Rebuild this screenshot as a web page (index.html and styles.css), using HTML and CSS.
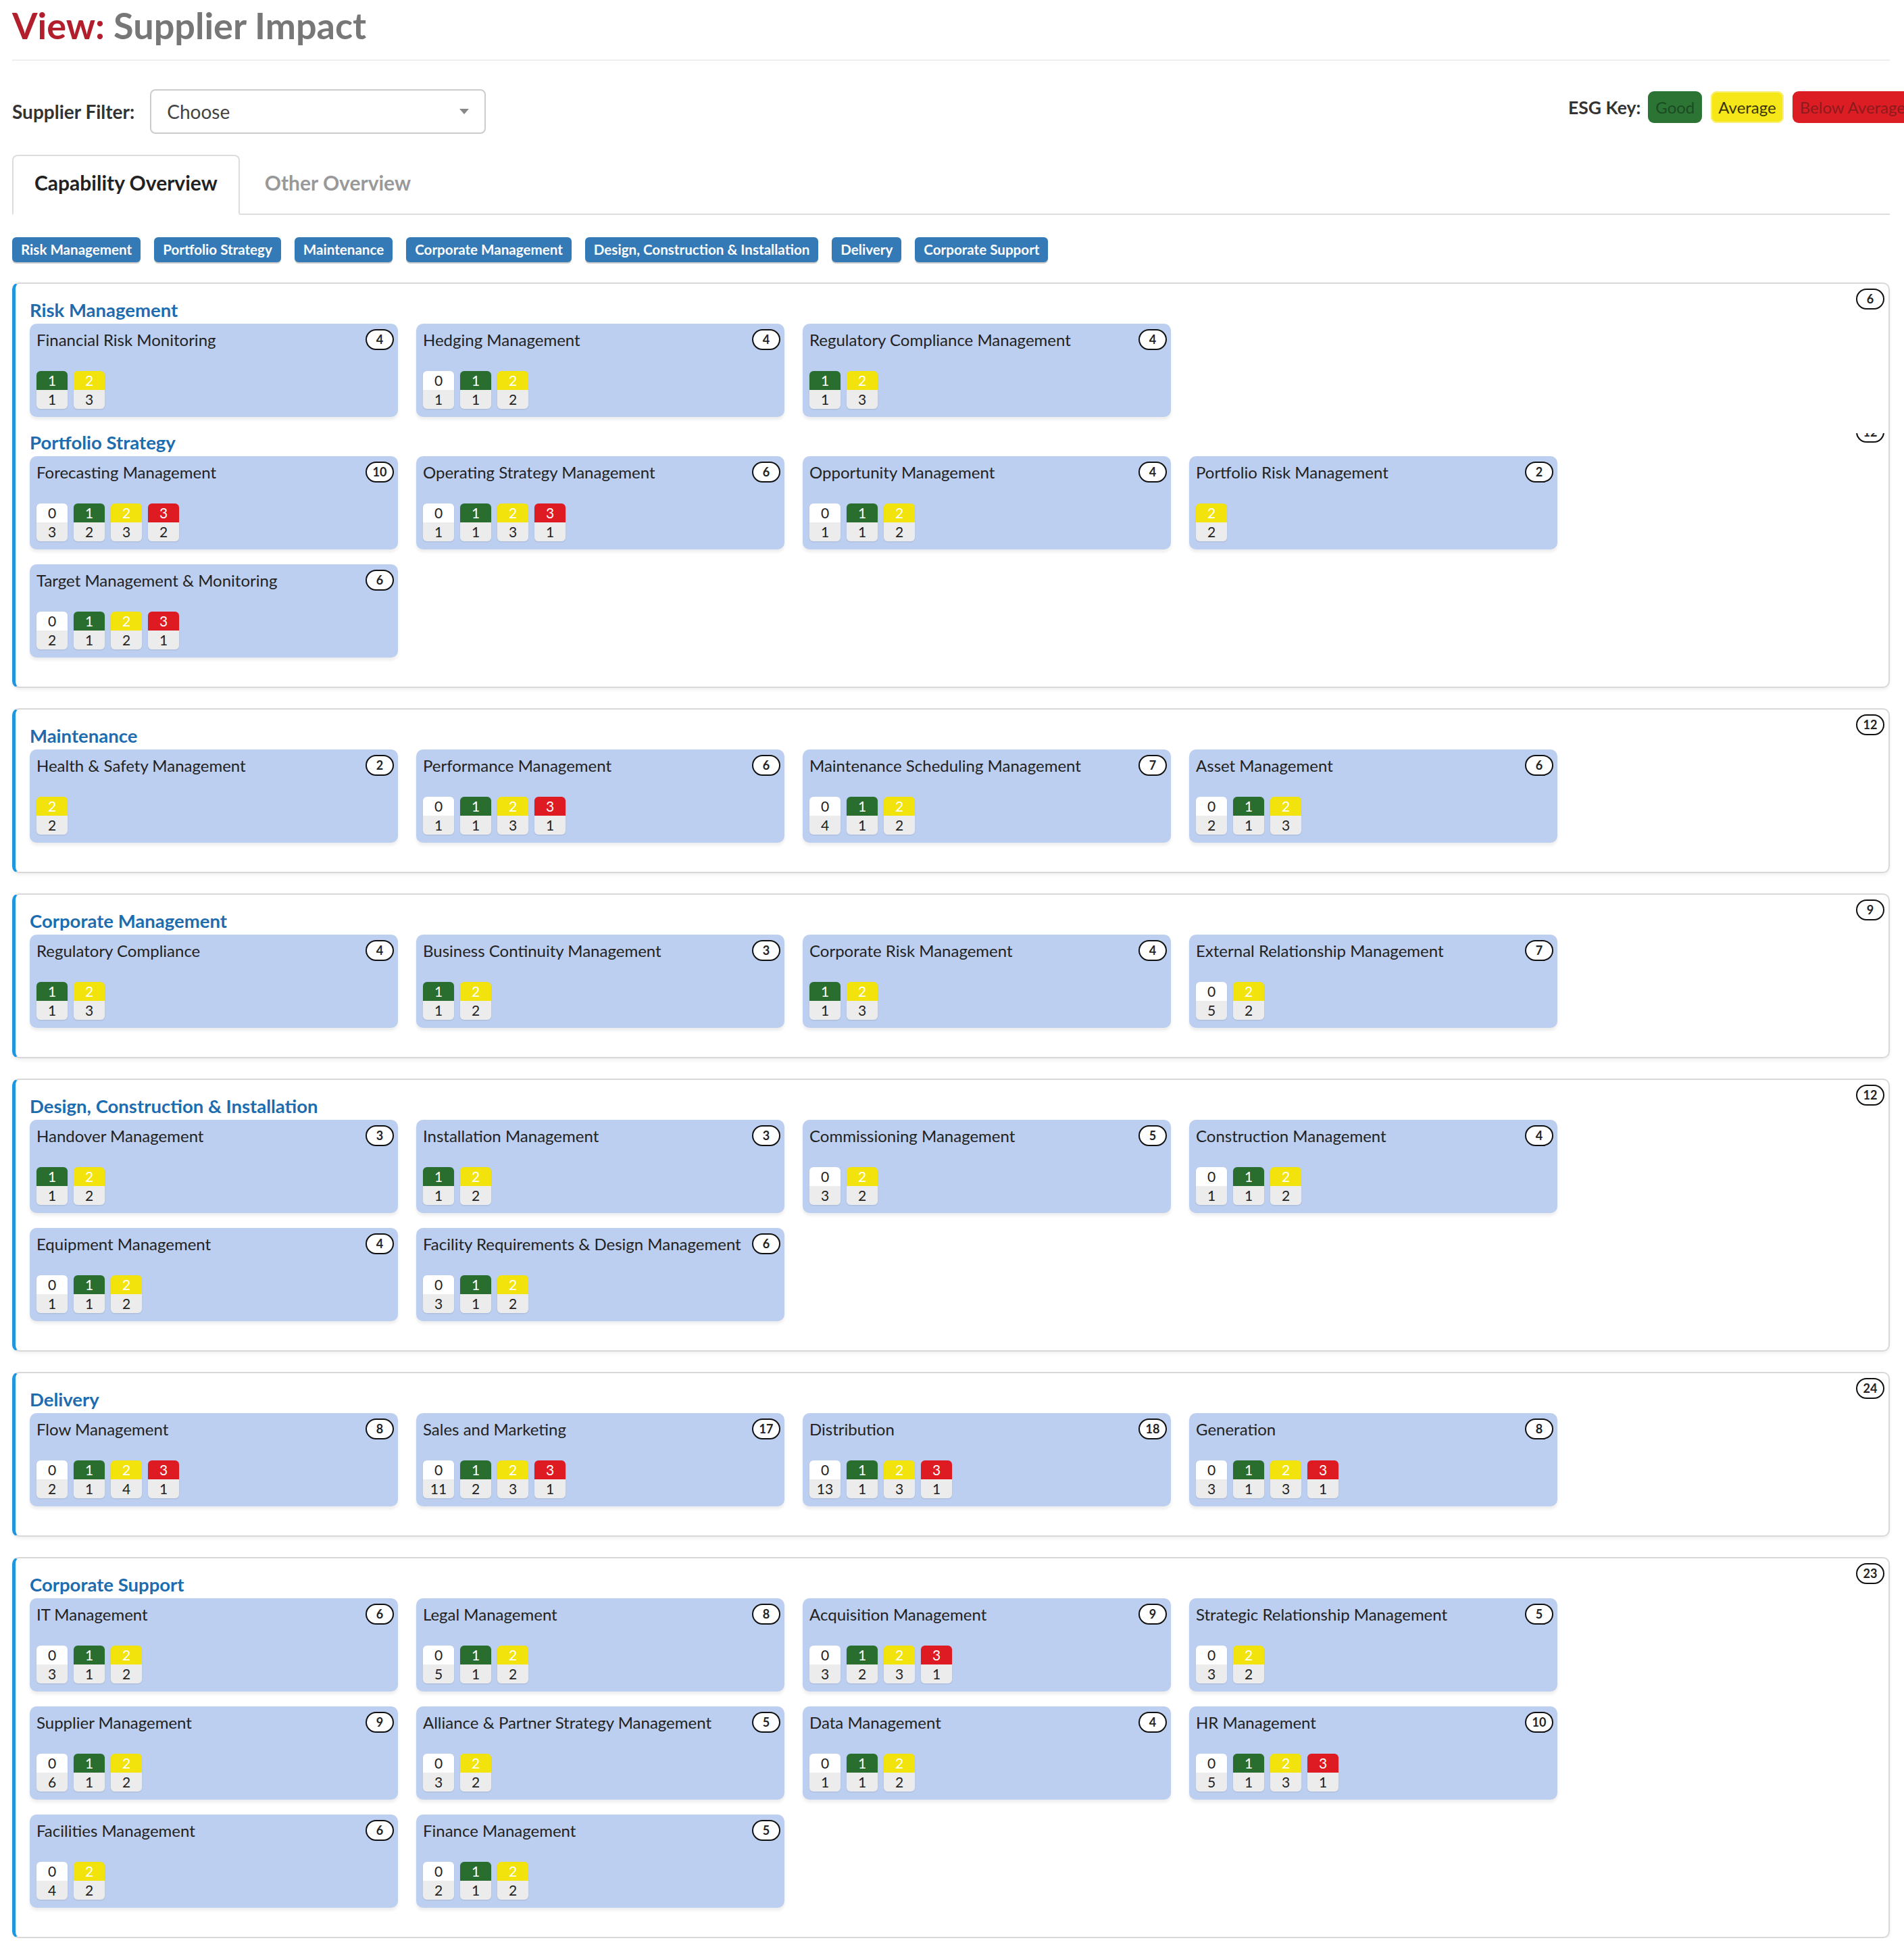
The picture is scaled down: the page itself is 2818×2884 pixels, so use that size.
FILE: index.html
```html
<!DOCTYPE html>
<html lang="en">
<head>
<meta charset="utf-8">
<title>View: Supplier Impact</title>
<link rel="stylesheet" href="styles.css">
</head>
<body>
<h1 class="page-title"><span class="view">View:</span> Supplier Impact</h1>
<hr class="rule">

<div class="filter-row">
  <div class="filter">
    <span class="filter-label">Supplier Filter:</span>
    <div class="select"><span>Choose</span><span class="caret"></span></div>
  </div>
  <div class="esg-key">
    <span class="esg-key-label">ESG Key:</span>
    <span class="key good">Good</span>
    <span class="key avg">Average</span>
    <span class="key below">Below Average</span>
  </div>
</div>

<div class="tabs">
  <div class="tab active">Capability Overview</div>
  <div class="tab">Other Overview</div>
</div>

<div class="chips">
  <span class="chip">Risk Management</span>
  <span class="chip">Portfolio Strategy</span>
  <span class="chip">Maintenance</span>
  <span class="chip">Corporate Management</span>
  <span class="chip">Design, Construction &amp; Installation</span>
  <span class="chip">Delivery</span>
  <span class="chip">Corporate Support</span>
</div>

<section class="panel">
  <span class="pill panel-count">6</span>
  <div class="group">
    <h2 class="group-title">Risk Management</h2>
    <div class="grid">
      <div class="card"><div class="card-head"><span class="card-title">Financial Risk Monitoring</span><span class="pill">4</span></div>
        <div class="scores"><span class="sc g"><span class="t">1</span><span class="b">1</span></span><span class="sc y"><span class="t">2</span><span class="b">3</span></span></div></div>
      <div class="card"><div class="card-head"><span class="card-title">Hedging Management</span><span class="pill">4</span></div>
        <div class="scores"><span class="sc z"><span class="t">0</span><span class="b">1</span></span><span class="sc g"><span class="t">1</span><span class="b">1</span></span><span class="sc y"><span class="t">2</span><span class="b">2</span></span></div></div>
      <div class="card"><div class="card-head"><span class="card-title">Regulatory Compliance Management</span><span class="pill">4</span></div>
        <div class="scores"><span class="sc g"><span class="t">1</span><span class="b">1</span></span><span class="sc y"><span class="t">2</span><span class="b">3</span></span></div></div>
    </div>
  </div>
  <div class="group">
    <div class="count-clip"><span class="pill">12</span></div>
    <h2 class="group-title">Portfolio Strategy</h2>
    <div class="grid">
      <div class="card"><div class="card-head"><span class="card-title">Forecasting Management</span><span class="pill">10</span></div>
        <div class="scores"><span class="sc z"><span class="t">0</span><span class="b">3</span></span><span class="sc g"><span class="t">1</span><span class="b">2</span></span><span class="sc y"><span class="t">2</span><span class="b">3</span></span><span class="sc r"><span class="t">3</span><span class="b">2</span></span></div></div>
      <div class="card"><div class="card-head"><span class="card-title">Operating Strategy Management</span><span class="pill">6</span></div>
        <div class="scores"><span class="sc z"><span class="t">0</span><span class="b">1</span></span><span class="sc g"><span class="t">1</span><span class="b">1</span></span><span class="sc y"><span class="t">2</span><span class="b">3</span></span><span class="sc r"><span class="t">3</span><span class="b">1</span></span></div></div>
      <div class="card"><div class="card-head"><span class="card-title">Opportunity Management</span><span class="pill">4</span></div>
        <div class="scores"><span class="sc z"><span class="t">0</span><span class="b">1</span></span><span class="sc g"><span class="t">1</span><span class="b">1</span></span><span class="sc y"><span class="t">2</span><span class="b">2</span></span></div></div>
      <div class="card"><div class="card-head"><span class="card-title">Portfolio Risk Management</span><span class="pill">2</span></div>
        <div class="scores"><span class="sc y"><span class="t">2</span><span class="b">2</span></span></div></div>
      <div class="card"><div class="card-head"><span class="card-title">Target Management &amp; Monitoring</span><span class="pill">6</span></div>
        <div class="scores"><span class="sc z"><span class="t">0</span><span class="b">2</span></span><span class="sc g"><span class="t">1</span><span class="b">1</span></span><span class="sc y"><span class="t">2</span><span class="b">2</span></span><span class="sc r"><span class="t">3</span><span class="b">1</span></span></div></div>
    </div>
  </div>
</section>

<section class="panel">
  <span class="pill panel-count">12</span>
  <div class="group">
    <h2 class="group-title">Maintenance</h2>
    <div class="grid">
      <div class="card"><div class="card-head"><span class="card-title">Health &amp; Safety Management</span><span class="pill">2</span></div>
        <div class="scores"><span class="sc y"><span class="t">2</span><span class="b">2</span></span></div></div>
      <div class="card"><div class="card-head"><span class="card-title">Performance Management</span><span class="pill">6</span></div>
        <div class="scores"><span class="sc z"><span class="t">0</span><span class="b">1</span></span><span class="sc g"><span class="t">1</span><span class="b">1</span></span><span class="sc y"><span class="t">2</span><span class="b">3</span></span><span class="sc r"><span class="t">3</span><span class="b">1</span></span></div></div>
      <div class="card"><div class="card-head"><span class="card-title">Maintenance Scheduling Management</span><span class="pill">7</span></div>
        <div class="scores"><span class="sc z"><span class="t">0</span><span class="b">4</span></span><span class="sc g"><span class="t">1</span><span class="b">1</span></span><span class="sc y"><span class="t">2</span><span class="b">2</span></span></div></div>
      <div class="card"><div class="card-head"><span class="card-title">Asset Management</span><span class="pill">6</span></div>
        <div class="scores"><span class="sc z"><span class="t">0</span><span class="b">2</span></span><span class="sc g"><span class="t">1</span><span class="b">1</span></span><span class="sc y"><span class="t">2</span><span class="b">3</span></span></div></div>
    </div>
  </div>
</section>

<section class="panel">
  <span class="pill panel-count">9</span>
  <div class="group">
    <h2 class="group-title">Corporate Management</h2>
    <div class="grid">
      <div class="card"><div class="card-head"><span class="card-title">Regulatory Compliance</span><span class="pill">4</span></div>
        <div class="scores"><span class="sc g"><span class="t">1</span><span class="b">1</span></span><span class="sc y"><span class="t">2</span><span class="b">3</span></span></div></div>
      <div class="card"><div class="card-head"><span class="card-title">Business Continuity Management</span><span class="pill">3</span></div>
        <div class="scores"><span class="sc g"><span class="t">1</span><span class="b">1</span></span><span class="sc y"><span class="t">2</span><span class="b">2</span></span></div></div>
      <div class="card"><div class="card-head"><span class="card-title">Corporate Risk Management</span><span class="pill">4</span></div>
        <div class="scores"><span class="sc g"><span class="t">1</span><span class="b">1</span></span><span class="sc y"><span class="t">2</span><span class="b">3</span></span></div></div>
      <div class="card"><div class="card-head"><span class="card-title">External Relationship Management</span><span class="pill">7</span></div>
        <div class="scores"><span class="sc z"><span class="t">0</span><span class="b">5</span></span><span class="sc y"><span class="t">2</span><span class="b">2</span></span></div></div>
    </div>
  </div>
</section>

<section class="panel">
  <span class="pill panel-count">12</span>
  <div class="group">
    <h2 class="group-title">Design, Construction &amp; Installation</h2>
    <div class="grid">
      <div class="card"><div class="card-head"><span class="card-title">Handover Management</span><span class="pill">3</span></div>
        <div class="scores"><span class="sc g"><span class="t">1</span><span class="b">1</span></span><span class="sc y"><span class="t">2</span><span class="b">2</span></span></div></div>
      <div class="card"><div class="card-head"><span class="card-title">Installation Management</span><span class="pill">3</span></div>
        <div class="scores"><span class="sc g"><span class="t">1</span><span class="b">1</span></span><span class="sc y"><span class="t">2</span><span class="b">2</span></span></div></div>
      <div class="card"><div class="card-head"><span class="card-title">Commissioning Management</span><span class="pill">5</span></div>
        <div class="scores"><span class="sc z"><span class="t">0</span><span class="b">3</span></span><span class="sc y"><span class="t">2</span><span class="b">2</span></span></div></div>
      <div class="card"><div class="card-head"><span class="card-title">Construction Management</span><span class="pill">4</span></div>
        <div class="scores"><span class="sc z"><span class="t">0</span><span class="b">1</span></span><span class="sc g"><span class="t">1</span><span class="b">1</span></span><span class="sc y"><span class="t">2</span><span class="b">2</span></span></div></div>
      <div class="card"><div class="card-head"><span class="card-title">Equipment Management</span><span class="pill">4</span></div>
        <div class="scores"><span class="sc z"><span class="t">0</span><span class="b">1</span></span><span class="sc g"><span class="t">1</span><span class="b">1</span></span><span class="sc y"><span class="t">2</span><span class="b">2</span></span></div></div>
      <div class="card"><div class="card-head"><span class="card-title">Facility Requirements &amp; Design Management</span><span class="pill">6</span></div>
        <div class="scores"><span class="sc z"><span class="t">0</span><span class="b">3</span></span><span class="sc g"><span class="t">1</span><span class="b">1</span></span><span class="sc y"><span class="t">2</span><span class="b">2</span></span></div></div>
    </div>
  </div>
</section>

<section class="panel">
  <span class="pill panel-count">24</span>
  <div class="group">
    <h2 class="group-title">Delivery</h2>
    <div class="grid">
      <div class="card"><div class="card-head"><span class="card-title">Flow Management</span><span class="pill">8</span></div>
        <div class="scores"><span class="sc z"><span class="t">0</span><span class="b">2</span></span><span class="sc g"><span class="t">1</span><span class="b">1</span></span><span class="sc y"><span class="t">2</span><span class="b">4</span></span><span class="sc r"><span class="t">3</span><span class="b">1</span></span></div></div>
      <div class="card"><div class="card-head"><span class="card-title">Sales and Marketing</span><span class="pill">17</span></div>
        <div class="scores"><span class="sc z"><span class="t">0</span><span class="b">11</span></span><span class="sc g"><span class="t">1</span><span class="b">2</span></span><span class="sc y"><span class="t">2</span><span class="b">3</span></span><span class="sc r"><span class="t">3</span><span class="b">1</span></span></div></div>
      <div class="card"><div class="card-head"><span class="card-title">Distribution</span><span class="pill">18</span></div>
        <div class="scores"><span class="sc z"><span class="t">0</span><span class="b">13</span></span><span class="sc g"><span class="t">1</span><span class="b">1</span></span><span class="sc y"><span class="t">2</span><span class="b">3</span></span><span class="sc r"><span class="t">3</span><span class="b">1</span></span></div></div>
      <div class="card"><div class="card-head"><span class="card-title">Generation</span><span class="pill">8</span></div>
        <div class="scores"><span class="sc z"><span class="t">0</span><span class="b">3</span></span><span class="sc g"><span class="t">1</span><span class="b">1</span></span><span class="sc y"><span class="t">2</span><span class="b">3</span></span><span class="sc r"><span class="t">3</span><span class="b">1</span></span></div></div>
    </div>
  </div>
</section>

<section class="panel">
  <span class="pill panel-count">23</span>
  <div class="group">
    <h2 class="group-title">Corporate Support</h2>
    <div class="grid">
      <div class="card"><div class="card-head"><span class="card-title">IT Management</span><span class="pill">6</span></div>
        <div class="scores"><span class="sc z"><span class="t">0</span><span class="b">3</span></span><span class="sc g"><span class="t">1</span><span class="b">1</span></span><span class="sc y"><span class="t">2</span><span class="b">2</span></span></div></div>
      <div class="card"><div class="card-head"><span class="card-title">Legal Management</span><span class="pill">8</span></div>
        <div class="scores"><span class="sc z"><span class="t">0</span><span class="b">5</span></span><span class="sc g"><span class="t">1</span><span class="b">1</span></span><span class="sc y"><span class="t">2</span><span class="b">2</span></span></div></div>
      <div class="card"><div class="card-head"><span class="card-title">Acquisition Management</span><span class="pill">9</span></div>
        <div class="scores"><span class="sc z"><span class="t">0</span><span class="b">3</span></span><span class="sc g"><span class="t">1</span><span class="b">2</span></span><span class="sc y"><span class="t">2</span><span class="b">3</span></span><span class="sc r"><span class="t">3</span><span class="b">1</span></span></div></div>
      <div class="card"><div class="card-head"><span class="card-title">Strategic Relationship Management</span><span class="pill">5</span></div>
        <div class="scores"><span class="sc z"><span class="t">0</span><span class="b">3</span></span><span class="sc y"><span class="t">2</span><span class="b">2</span></span></div></div>
      <div class="card"><div class="card-head"><span class="card-title">Supplier Management</span><span class="pill">9</span></div>
        <div class="scores"><span class="sc z"><span class="t">0</span><span class="b">6</span></span><span class="sc g"><span class="t">1</span><span class="b">1</span></span><span class="sc y"><span class="t">2</span><span class="b">2</span></span></div></div>
      <div class="card"><div class="card-head"><span class="card-title">Alliance &amp; Partner Strategy Management</span><span class="pill">5</span></div>
        <div class="scores"><span class="sc z"><span class="t">0</span><span class="b">3</span></span><span class="sc y"><span class="t">2</span><span class="b">2</span></span></div></div>
      <div class="card"><div class="card-head"><span class="card-title">Data Management</span><span class="pill">4</span></div>
        <div class="scores"><span class="sc z"><span class="t">0</span><span class="b">1</span></span><span class="sc g"><span class="t">1</span><span class="b">1</span></span><span class="sc y"><span class="t">2</span><span class="b">2</span></span></div></div>
      <div class="card"><div class="card-head"><span class="card-title">HR Management</span><span class="pill">10</span></div>
        <div class="scores"><span class="sc z"><span class="t">0</span><span class="b">5</span></span><span class="sc g"><span class="t">1</span><span class="b">1</span></span><span class="sc y"><span class="t">2</span><span class="b">3</span></span><span class="sc r"><span class="t">3</span><span class="b">1</span></span></div></div>
      <div class="card"><div class="card-head"><span class="card-title">Facilities Management</span><span class="pill">6</span></div>
        <div class="scores"><span class="sc z"><span class="t">0</span><span class="b">4</span></span><span class="sc y"><span class="t">2</span><span class="b">2</span></span></div></div>
      <div class="card"><div class="card-head"><span class="card-title">Finance Management</span><span class="pill">5</span></div>
        <div class="scores"><span class="sc z"><span class="t">0</span><span class="b">2</span></span><span class="sc g"><span class="t">1</span><span class="b">1</span></span><span class="sc y"><span class="t">2</span><span class="b">2</span></span></div></div>
    </div>
  </div>
</section>
</body>
</html>
```

FILE: styles.css
```css
html {
  overflow-x: hidden;
}

body {
  margin: 0;
  padding: 0 21px 0 18px;
  font-family: Lato, "Liberation Sans", sans-serif;
  color: #222;
  background: #fff;
}

.page-title {
  margin: 0;
  padding-top: 7px;
  font-size: 54px;
  line-height: 62px;
  font-weight: 700;
  color: #777;
}

.page-title .view {
  color: #b31e2c;
}

.rule {
  border: 0;
  border-top: 2px solid #eee;
  margin: 19px 0 0;
}

.filter-row {
  display: flex;
  justify-content: space-between;
  align-items: flex-start;
  margin-top: 42px;
}

.filter {
  display: flex;
  align-items: center;
  gap: 23px;
}

.filter-label {
  font-size: 28px;
  font-weight: 700;
  color: #333;
}

.select {
  box-sizing: border-box;
  width: 497px;
  height: 66px;
  border: 2px solid #ccc;
  border-radius: 8px;
  display: flex;
  align-items: center;
  justify-content: space-between;
  padding: 0 23px 0 23px;
  font-size: 28px;
  color: #444;
}

.caret {
  width: 0;
  height: 0;
  border-left: 7px solid transparent;
  border-right: 7px solid transparent;
  border-top: 8px solid #888;
}

.esg-key {
  display: flex;
  align-items: center;
  gap: 13px;
  margin-top: 3px;
  margin-right: -34px;
}

.esg-key-label {
  font-size: 26.5px;
  font-weight: 700;
  color: #333;
  margin-right: -2px;
}

.key {
  height: 47px;
  line-height: 47px;
  border-radius: 9px;
  padding: 0 11px;
  font-size: 24px;
}

.key.good {
  background: #2b7434;
  color: #1c4a22;
}

.key.avg {
  background: #f6e718;
  color: #3b3505;
  box-shadow: inset 0 0 0 2px #f9ef7a;
}

.key.below {
  background: #dc1e24;
  color: #8c1a1e;
}

.tabs {
  display: flex;
  margin-top: 31px;
  border-bottom: 2px solid #ddd;
}

.tab {
  padding: 21px 31px 28px;
  margin: 0 4px -2px 0;
  font-size: 30px;
  line-height: 36px;
  font-weight: 700;
  color: #999;
  border: 2px solid transparent;
  border-bottom: 2px solid transparent;
  border-radius: 8px 8px 0 0;
}

.tab.active {
  color: #222;
  background: #fff;
  border-color: #ddd;
  border-bottom-color: #fff;
}

.chips {
  display: flex;
  gap: 20px;
  margin-top: 33px;
}

.chip {
  height: 37px;
  line-height: 37px;
  padding: 0 13px;
  border-radius: 6px;
  background: #337ab7;
  color: #fff;
  font-size: 20.6px;
  font-weight: 700;
  box-shadow: 0 2px 1px rgba(0, 0, 0, 0.22);
}

.panel {
  position: relative;
  margin-top: 30px;
  border: 2px solid #d8d8d8;
  border-left: 5px solid #1f97de;
  border-radius: 10px;
  padding: 24px 21px 43px;
  box-shadow: 0 3px 5px rgba(0, 0, 0, 0.06);
}

.panel-count {
  position: absolute;
  top: 7px;
  right: 6px;
}

.group {
  position: relative;
}

.group + .group {
  margin-top: 23px;
}

.count-clip {
  position: absolute;
  top: 1px;
  right: -15px;
  width: 42px;
  height: 14px;
  overflow: hidden;
}

.count-clip .pill {
  position: absolute;
  bottom: 0;
  left: 0;
}

.group-title {
  margin: 0 0 5px;
  font-size: 27.5px;
  line-height: 30px;
  font-weight: 700;
  color: #1d6cb0;
}

.grid {
  display: grid;
  grid-template-columns: repeat(4, 545px);
  column-gap: 27px;
  row-gap: 22px;
}

.card {
  background: #bdcff0;
  border-radius: 10px;
  padding: 8px 6px 12px 10px;
  box-shadow: 0 4px 4px rgba(0, 0, 0, 0.07);
}

.card-head {
  display: flex;
  justify-content: space-between;
  align-items: flex-start;
}

.card-title {
  font-size: 24px;
  line-height: 31px;
  color: #222;
}

.pill {
  box-sizing: border-box;
  min-width: 42px;
  height: 31px;
  padding: 0 6px;
  border: 2px solid #111;
  border-radius: 16px;
  background: #fff;
  color: #222;
  font-size: 18px;
  font-weight: 700;
  line-height: 27px;
  text-align: center;
}

.scores {
  display: flex;
  gap: 9px;
  margin-top: 31px;
}

.sc {
  width: 46px;
  display: flex;
  flex-direction: column;
  border-radius: 6px;
  overflow: hidden;
  box-shadow: 0 1px 2px rgba(0, 0, 0, 0.12);
}

.sc span {
  height: 28px;
  line-height: 28px;
  text-align: center;
  font-size: 21px;
}

.sc .b {
  background: #ececec;
  color: #222;
}

.sc.z .t {
  background: #fff;
  color: #222;
}

.sc.g .t {
  background: #2a6e2f;
  color: #fff;
}

.sc.y .t {
  background: #f2e30d;
  color: #fff;
}

.sc.r .t {
  background: #de1b22;
  color: #fff;
}
```
